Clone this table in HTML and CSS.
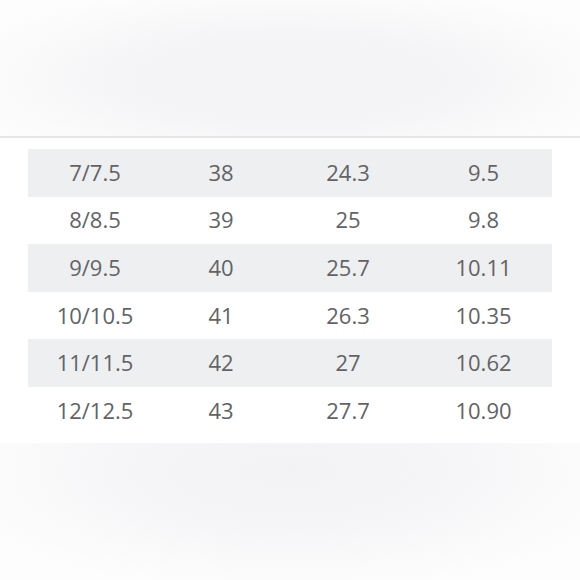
FILE: index.html
```html
<!DOCTYPE html>
<html>
<head>
<meta charset="utf-8">
<link rel="stylesheet" href="styles.css">
</head>
<body>
<div class="top"></div>
<div class="card">
  <div class="table">
    <div class="row shade"><span>7/7.5</span><span>38</span><span>24.3</span><span>9.5</span></div>
    <div class="row"><span>8/8.5</span><span>39</span><span>25</span><span>9.8</span></div>
    <div class="row shade"><span>9/9.5</span><span>40</span><span>25.7</span><span>10.11</span></div>
    <div class="row"><span>10/10.5</span><span>41</span><span>26.3</span><span>10.35</span></div>
    <div class="row shade"><span>11/11.5</span><span>42</span><span>27</span><span>10.62</span></div>
    <div class="row"><span>12/12.5</span><span>43</span><span>27.7</span><span>10.90</span></div>
  </div>
</div>
<div class="bottom"></div>
</body>
</html>
```
FILE: styles.css
```css
html, body {
  margin: 0;
  padding: 0;
  width: 580px;
  height: 580px;
  overflow: hidden;
  background: #ffffff;
  font-family: "Open Sans", Lato, sans-serif;
}
.top {
  height: 136px;
  background: radial-gradient(ellipse 60% 70% at 50% 58%, #f3f3f5 0%, #f5f5f7 50%, #fdfdfd 100%);
  border-bottom: 2px solid #e6e6e6;
}
.card {
  background: #ffffff;
  padding: 11px 28px 8px 28px;
  height: 286px;
}
.table {
  display: flex;
  flex-direction: column;
}
.row {
  display: grid;
  grid-template-columns: 134px 118px 136px 135px;
  height: 47.6px;
  align-items: center;
  font-size: 22px;
  font-weight: 400;
  color: #636366;
}
.row span {
  text-align: center;
  line-height: 1;
  padding-bottom: 2px;
}
.shade {
  background: #eeeff1;
}
.bottom {
  height: 137px;
  background: radial-gradient(ellipse 60% 90% at 50% 20%, #f2f2f4 0%, #f6f6f8 50%, #fdfdfd 100%);
}
```
